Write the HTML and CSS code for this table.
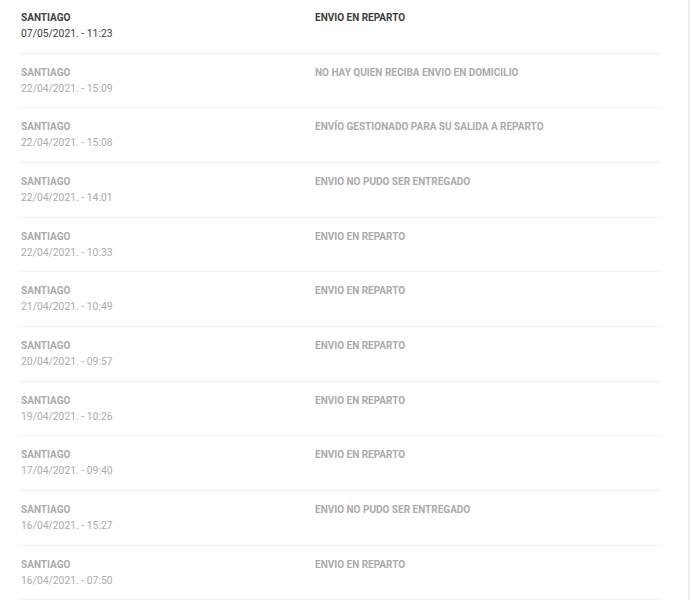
FILE: index.html
```html
<!DOCTYPE html>
<html lang="es">
<head>
<meta charset="utf-8">
<title>Seguimiento</title>
<link rel="stylesheet" href="styles.css">
</head>
<body>
<div class="page">
  <ul class="events">
    <li class="event current">
      <div class="where"><div class="place">SANTIAGO</div><div class="date">07/05/2021. - 11:23</div></div>
      <div class="status">ENVIO EN REPARTO</div>
    </li>
    <li class="event">
      <div class="where"><div class="place">SANTIAGO</div><div class="date">22/04/2021. - 15:09</div></div>
      <div class="status">NO HAY QUIEN RECIBA ENVIO EN DOMICILIO</div>
    </li>
    <li class="event">
      <div class="where"><div class="place">SANTIAGO</div><div class="date">22/04/2021. - 15:08</div></div>
      <div class="status">ENVÍO GESTIONADO PARA SU SALIDA A REPARTO</div>
    </li>
    <li class="event">
      <div class="where"><div class="place">SANTIAGO</div><div class="date">22/04/2021. - 14:01</div></div>
      <div class="status">ENVIO NO PUDO SER ENTREGADO</div>
    </li>
    <li class="event">
      <div class="where"><div class="place">SANTIAGO</div><div class="date">22/04/2021. - 10:33</div></div>
      <div class="status">ENVIO EN REPARTO</div>
    </li>
    <li class="event">
      <div class="where"><div class="place">SANTIAGO</div><div class="date">21/04/2021. - 10:49</div></div>
      <div class="status">ENVIO EN REPARTO</div>
    </li>
    <li class="event">
      <div class="where"><div class="place">SANTIAGO</div><div class="date">20/04/2021. - 09:57</div></div>
      <div class="status">ENVIO EN REPARTO</div>
    </li>
    <li class="event">
      <div class="where"><div class="place">SANTIAGO</div><div class="date">19/04/2021. - 10:26</div></div>
      <div class="status">ENVIO EN REPARTO</div>
    </li>
    <li class="event">
      <div class="where"><div class="place">SANTIAGO</div><div class="date">17/04/2021. - 09:40</div></div>
      <div class="status">ENVIO EN REPARTO</div>
    </li>
    <li class="event">
      <div class="where"><div class="place">SANTIAGO</div><div class="date">16/04/2021. - 15:27</div></div>
      <div class="status">ENVIO NO PUDO SER ENTREGADO</div>
    </li>
    <li class="event">
      <div class="where"><div class="place">SANTIAGO</div><div class="date">16/04/2021. - 07:50</div></div>
      <div class="status">ENVIO EN REPARTO</div>
    </li>
  </ul>
</div>
</body>
</html>
```

FILE: styles.css
```css
html, body {
  margin: 0;
  padding: 0;
  background: #ffffff;
}
body {
  font-family: Roboto, "Liberation Sans", Arial, sans-serif;
  font-size: 10px;
  line-height: 16px;
  overflow: hidden;
}
.page {
  height: 600px;
  width: 688px;
  border-right: 2px solid #eeeeee;
  overflow: hidden;
}
.events {
  list-style: none;
  margin: -1px 0 0;
  padding: 0 0 0 21px;
  width: 638px;
}
.event {
  display: grid;
  grid-template-columns: 294px 1fr;
  padding: 11px 0 10.67px;
  height: 32px;
  border-bottom: 1px solid #eeeeee;
  color: #ababab;
}
.place, .status {
  font-weight: 700;
  font-size: 10px;
}
.date {
  font-size: 10.35px;
}
.current {
  color: #3d3d3d;
}
```
